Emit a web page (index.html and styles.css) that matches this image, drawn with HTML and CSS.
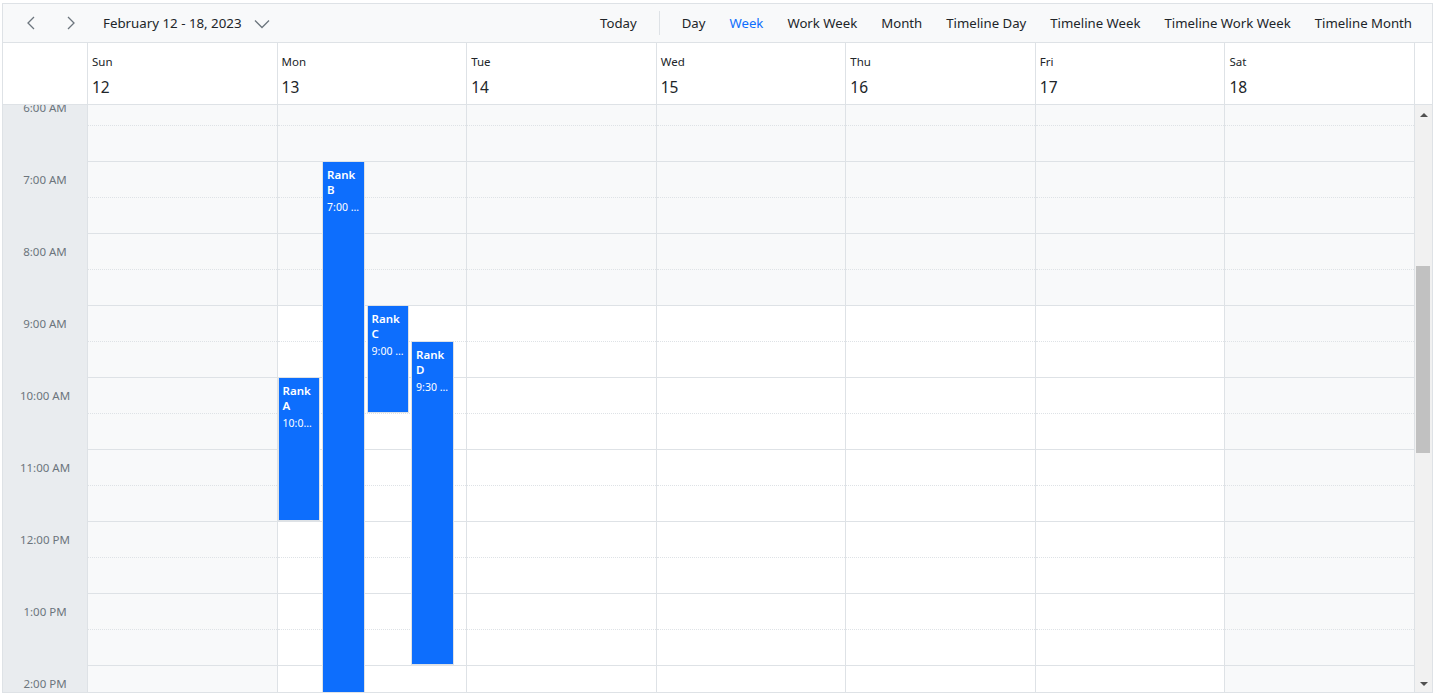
FILE: index.html
```html
<!DOCTYPE html>
<html lang="en">
<head>
  <meta charset="UTF-8" />
  <meta name="viewport" content="width=device-width, initial-scale=1" />
  <title>Schedule - Week</title>
  <link rel="stylesheet" href="styles.css">
</head>
<body>
  <div class="schedule">
    <div class="toolbar">
      <div class="tb-left">
        <button class="nav-btn" title="Previous">
          <svg width="10" height="14" viewBox="0 0 10 14"><path d="M8 1 L2 7 L8 13" /></svg>
        </button>
        <button class="nav-btn" title="Next">
          <svg width="10" height="14" viewBox="0 0 10 14"><path d="M2 1 L8 7 L2 13" /></svg>
        </button>
        <button class="date-range">
          February 12 - 18, 2023
          <svg width="16" height="10" viewBox="0 0 16 10"><path d="M1 1.5 L8 8.5 L15 1.5" /></svg>
        </button>
      </div>
      <div class="tb-right">
        <button class="tb-item">Today</button>
        <span class="tb-sep"></span>
        <button class="tb-item">Day</button>
        <button class="tb-item active">Week</button>
        <button class="tb-item">Work Week</button>
        <button class="tb-item">Month</button>
        <button class="tb-item">Timeline Day</button>
        <button class="tb-item">Timeline Week</button>
        <button class="tb-item">Timeline Work Week</button>
        <button class="tb-item">Timeline Month</button>
      </div>
    </div>

    <div class="header-row">
      <div class="corner"></div>
      <div class="date-header">
        <div class="date-cell"><div class="day-name">Sun</div><div class="day-num">12</div></div>
        <div class="date-cell"><div class="day-name">Mon</div><div class="day-num">13</div></div>
        <div class="date-cell"><div class="day-name">Tue</div><div class="day-num">14</div></div>
        <div class="date-cell"><div class="day-name">Wed</div><div class="day-num">15</div></div>
        <div class="date-cell"><div class="day-name">Thu</div><div class="day-num">16</div></div>
        <div class="date-cell"><div class="day-name">Fri</div><div class="day-num">17</div></div>
        <div class="date-cell"><div class="day-name">Sat</div><div class="day-num">18</div></div>
      </div>
      <div class="header-gap"></div>
    </div>

    <div class="content">
      <div class="time-col"><div class="scroll-inner" id="times"></div></div>
      <div class="days"><div class="day-grid scroll-inner" id="grid"></div></div>
      <div class="scrollbar">
        <div class="sb-btn up"><span class="arrow-up"></span></div>
        <div class="sb-track"><div class="sb-thumb"></div></div>
        <div class="sb-btn down"><span class="arrow-down"></span></div>
      </div>
    </div>
  </div>

  <script>
    // first visible hour and last rendered hour
    const FIRST = 6, LAST = 14, HOUR = 72;
    const timesDiv = document.getElementById('times');
    const grid = document.getElementById('grid');

    const events = [
      { subject: 'Rank A', time: '10:00 AM - 12:00 PM', start: 10, end: 12, lane: 0 },
      { subject: 'Rank B', time: '7:00 AM - 3:00 PM', start: 7, end: 15, lane: 1 },
      { subject: 'Rank C', time: '9:00 AM - 10:30 AM', start: 9, end: 10.5, lane: 2 },
      { subject: 'Rank D', time: '9:30 AM - 2:00 PM', start: 9.5, end: 14, lane: 3 }
    ];

    for (let h = FIRST; h <= LAST; h++) {
      const cell = document.createElement('div');
      cell.className = 'time-cell';
      const label = document.createElement('div');
      label.className = 'time-label';
      label.textContent = (h % 12 || 12) + ':00 ' + (h < 12 ? 'AM' : 'PM');
      cell.appendChild(label);
      timesDiv.appendChild(cell);
    }

    for (let d = 0; d < 7; d++) {
      const col = document.createElement('div');
      col.className = 'day-col';
      for (let h = FIRST; h <= LAST; h++) {
        for (let half = 0; half < 2; half++) {
          const slot = document.createElement('div');
          slot.className = 'slot' + (half ? ' half' : '');
          if (d === 0 || d === 6 || h < 9 || h >= 18) slot.className += ' off';
          col.appendChild(slot);
        }
      }
      if (d === 1) {
        events.forEach(ev => {
          const box = document.createElement('div');
          box.className = 'appt';
          box.style.top = ((ev.start - FIRST) * HOUR) + 'px';
          box.style.height = ((ev.end - ev.start) * HOUR) + 'px';
          box.style.left = (ev.lane * 23.6) + '%';
          box.innerHTML = '<div class="appt-subject">' + ev.subject + '</div>' +
                          '<div class="appt-time">' + ev.time + '</div>';
          col.appendChild(box);
        });
      }
      grid.appendChild(col);
    }
  </script>
</body>
</html>
```

FILE: styles.css
```css
* {
  box-sizing: border-box;
}
body {
  margin: 0;
  font-family: "Noto Sans", "Open Sans", sans-serif;
  color: #212529;
  background: #fff;
}
button {
  font-family: inherit;
  color: inherit;
  background: none;
  border: none;
  cursor: pointer;
  padding: 0;
}
.schedule {
  margin: 3px 1px 0 2px;
  height: 690px;
  border: 1px solid #dee2e6;
  display: flex;
  flex-direction: column;
}

/* toolbar */
.toolbar {
  height: 39px;
  flex: none;
  background: #f8f9fa;
  border-bottom: 1px solid #dee2e6;
  display: flex;
  align-items: center;
  justify-content: space-between;
}
.tb-left {
  display: flex;
  align-items: center;
  height: 100%;
  padding-left: 8px;
}
.nav-btn {
  width: 40px;
  height: 100%;
  display: flex;
  align-items: center;
  justify-content: center;
}
.nav-btn svg path, .date-range svg path {
  fill: none;
  stroke: #6c757d;
  stroke-width: 1.3;
}
.date-range {
  height: 100%;
  padding: 0 12px;
  font-size: 13.3px;
  display: flex;
  align-items: center;
  gap: 12px;
}
.date-range svg {
  margin-top: 1px;
}
.tb-right {
  display: flex;
  align-items: center;
  height: 100%;
  padding-right: 8px;
}
.tb-item {
  height: 100%;
  padding: 0 12px;
  font-size: 13.2px;
  color: #212529;
}
.tb-item.active {
  color: #0d6efd;
}
.tb-sep {
  width: 1px;
  height: 24px;
  background: #dee2e6;
  margin: 0 10px;
}

/* date header */
.header-row {
  height: 62px;
  flex: none;
  display: flex;
  border-bottom: 1px solid #dee2e6;
}
.corner {
  width: 85px;
  flex: none;
  border-right: 1px solid #dee2e6;
}
.date-header {
  flex: 1;
  display: grid;
  grid-template-columns: repeat(7, 1fr);
}
.date-cell {
  border-right: 1px solid #dee2e6;
  padding: 10px 0 0 4px;
}
.day-name {
  font-size: 11.5px;
  line-height: 18px;
}
.day-num {
  font-size: 15.5px;
  line-height: 22px;
  margin-top: 5px;
}
.header-gap {
  width: 17px;
  flex: none;
}

/* content */
.content {
  flex: 1;
  min-height: 0;
  display: flex;
  overflow: hidden;
}
.scroll-inner {
  margin-top: -16px;
}
.time-col {
  width: 85px;
  flex: none;
  background: #e9ecef;
  border-right: 1px solid #dee2e6;
  overflow: hidden;
}
.time-cell {
  height: 72px;
}
.time-label {
  height: 37px;
  line-height: 37px;
  text-align: center;
  font-size: 11.5px;
  color: #6c757d;
}
.days {
  flex: 1;
  overflow: hidden;
}
.day-grid {
  display: grid;
  grid-template-columns: repeat(7, 1fr);
}
.day-col {
  position: relative;
  border-right: 1px solid #dee2e6;
}
.slot {
  height: 36px;
  border-top: 1px solid #dee2e6;
  background: #fff;
}
.slot.half {
  border-top: 1px dotted #dee2e6;
}
.slot.off {
  background: #f8f9fa;
}

/* appointments */
.appt {
  position: absolute;
  width: calc(23.6% - 2px);
  background: #0d6efd;
  border: 1px solid #dee2e6;
  color: #fff;
  padding: 5px 4px;
  overflow: hidden;
}
.appt-subject {
  font-size: 11.5px;
  font-weight: 600;
  line-height: 15px;
}
.appt-time {
  font-size: 10.5px;
  line-height: 15px;
  margin-top: 3px;
  white-space: nowrap;
  overflow: hidden;
  text-overflow: ellipsis;
}

/* scrollbar */
.scrollbar {
  width: 17px;
  flex: none;
  background: #f1f1f1;
  display: flex;
  flex-direction: column;
}
.sb-btn {
  height: 17px;
  flex: none;
  display: flex;
  justify-content: center;
  align-items: center;
}
.sb-btn.up {
  padding-top: 3px;
}
.arrow-up {
  border-left: 4px solid transparent;
  border-right: 4px solid transparent;
  border-bottom: 4px solid #505050;
}
.arrow-down {
  border-left: 4px solid transparent;
  border-right: 4px solid transparent;
  border-top: 4px solid #505050;
}
.sb-track {
  flex: 1;
}
.sb-thumb {
  margin: 144px 2px 0 1px;
  height: 187px;
  background: #c1c1c1;
}
```
